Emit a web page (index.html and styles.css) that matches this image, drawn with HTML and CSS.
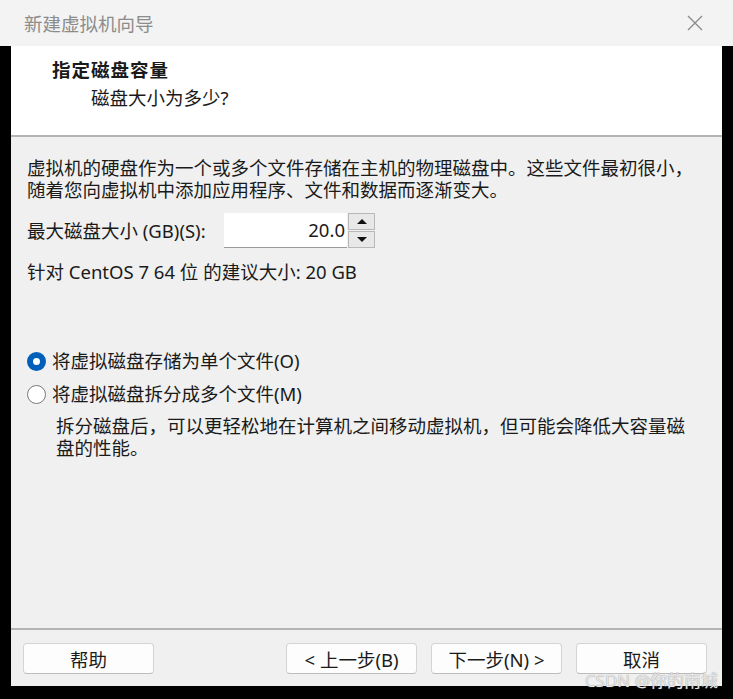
FILE: index.html
```html
<!DOCTYPE html>
<html lang="zh">
<head>
    <meta charset="UTF-8">
    <title>新建虚拟机向导</title>
    <link rel="stylesheet" href="styles.css">
</head>
<body>
    <div class="titlebar">
        <span class="title">新建虚拟机向导</span>
        <svg class="close" width="18" height="18" viewBox="0 0 18 18">
            <path d="M2 2 L16 16 M16 2 L2 16" stroke="#8c8c8c" stroke-width="1.4" fill="none"/>
        </svg>
    </div>
    <div class="frame">
        <div class="dialog">
            <div class="header">
                <h1>指定磁盘容量</h1>
                <p class="subtitle">磁盘大小为多少?</p>
            </div>
            <div class="content">
                <p class="desc">虚拟机的硬盘作为一个或多个文件存储在主机的物理磁盘中。这些文件最初很小，随着您向虚拟机中添加应用程序、文件和数据而逐渐变大。</p>
                <div class="size-row">
                    <label>最大磁盘大小 (GB)(S):</label>
                    <div class="spin-input">20.0</div>
                    <div class="spin">
                        <span class="spin-btn"><span class="arrow-up"></span></span>
                        <span class="spin-btn"><span class="arrow-down"></span></span>
                    </div>
                </div>
                <p class="recommend">针对 CentOS 7 64 位 的建议大小: 20 GB</p>

                <div class="radio-row first">
                    <span class="radio checked"></span>
                    <span>将虚拟磁盘存储为单个文件(O)</span>
                </div>
                <div class="radio-row">
                    <span class="radio"></span>
                    <span>将虚拟磁盘拆分成多个文件(M)</span>
                </div>
                <p class="split-note">拆分磁盘后，可以更轻松地在计算机之间移动虚拟机，但可能会降低大容量磁盘的性能。</p>
            </div>
            <div class="footer">
                <button>帮助</button>
                <div class="nav">
                    <button>&lt; 上一步(B)</button>
                    <button>下一步(N) &gt;</button>
                    <button>取消</button>
                </div>
            </div>
        </div>
    </div>
    <div class="watermark">CSDN @你的南城</div>
</body>
</html>
```

FILE: styles.css
```css
body {
    margin: 0;
    width: 733px;
    height: 699px;
    background-color: #000;
    font-family: "Noto Sans", "Noto Sans CJK SC", sans-serif;
    font-size: 18.5px;
    color: #1a1a1a;
    position: relative;
    overflow: hidden;
}
p {
    margin: 0;
}
.titlebar {
    height: 46px;
    background-color: #f3f3f3;
    display: flex;
    align-items: center;
    justify-content: space-between;
    padding: 0 29px 0 24px;
}
.title {
    color: #8c8c8c;
    font-size: 18.5px;
}
.close {
    display: block;
}
.frame {
    padding: 0 11px 13px 11px;
    height: 640px;
}
.dialog {
    height: 640px;
    display: flex;
    flex-direction: column;
    background-color: #f0f0f0;
}
.header {
    height: 91px;
    box-sizing: border-box;
    background-color: #fff;
    border-bottom: 2px solid #b4b4b4;
    padding: 12px 0 0 41px;
}
.header h1 {
    margin: 0;
    font-size: 18.5px;
    font-weight: bold;
    line-height: 24px;
    letter-spacing: 1px;
}
.subtitle {
    margin-left: 39px;
    margin-top: 4px;
    line-height: 24px;
}
.content {
    flex: 1;
    padding: 20px 16px 0 16px;
    line-height: 22px;
}
.size-row {
    margin-top: 12px;
    display: flex;
    align-items: center;
    height: 35px;
}
.size-row label {
    width: 197px;
}
.spin-input {
    width: 123px;
    height: 35px;
    box-sizing: border-box;
    background-color: #fff;
    border-bottom: 1px solid #9a9a9a;
    text-align: right;
    padding-right: 2px;
    line-height: 33px;
}
.spin {
    width: 27px;
    height: 35px;
    display: flex;
    flex-direction: column;
    gap: 1px;
    margin-left: 1px;
}
.spin-btn {
    flex: 1;
    background-color: #e8e8e8;
    border: 1px solid #b8b8b8;
    display: flex;
    align-items: center;
    justify-content: center;
}
.arrow-up {
    border-left: 5px solid transparent;
    border-right: 5px solid transparent;
    border-bottom: 5px solid #111;
}
.arrow-down {
    border-left: 5px solid transparent;
    border-right: 5px solid transparent;
    border-top: 5px solid #111;
}
.recommend {
    margin-top: 13px;
}
.radio-row {
    display: flex;
    align-items: center;
    gap: 6px;
    margin-top: 11px;
}
.radio-row.first {
    margin-top: 67px;
}
.radio {
    width: 19px;
    height: 19px;
    box-sizing: border-box;
    border-radius: 50%;
    border: 1px solid #7a7a7a;
    background-color: #fff;
}
.radio.checked {
    border: 6px solid #005fb8;
}
.split-note {
    margin-top: 10px;
    padding: 0 10px 0 29px;
}
.footer {
    height: 58px;
    box-sizing: border-box;
    border-top: 2px solid #b4b4b4;
    padding: 13px 15px 0 12px;
    display: flex;
    justify-content: space-between;
    align-items: flex-start;
}
.nav {
    display: flex;
    gap: 14px;
}
button {
    width: 131px;
    height: 31px;
    font-family: inherit;
    font-size: 18.5px;
    color: #1a1a1a;
    background-color: #fdfdfd;
    border: 1px solid #d4d4d4;
    border-bottom-color: #bcbcbc;
    border-radius: 4px;
    padding: 0;
}
.watermark {
    position: absolute;
    right: 15px;
    bottom: 11px;
    font-size: 17px;
    line-height: 14px;
    color: #e6e6e6;
    text-shadow: 0 0 1px #8a8a8a;
}
```
